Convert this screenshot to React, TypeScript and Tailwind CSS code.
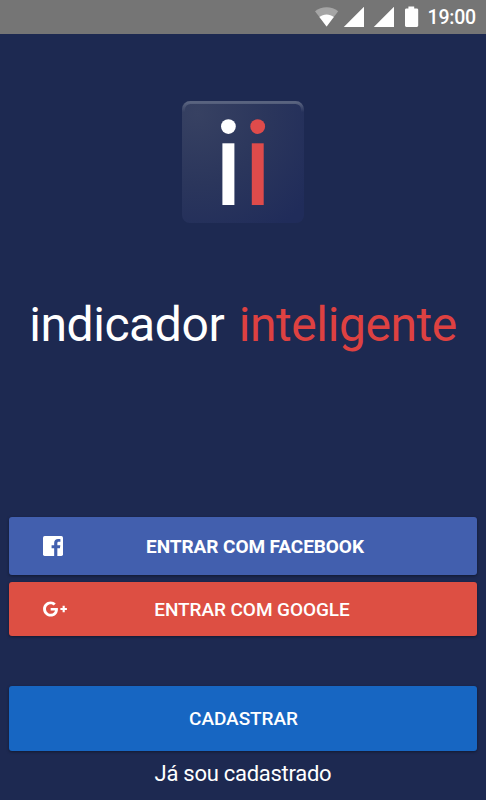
import type { ReactNode } from "react";

/** Status bar glyphs: wifi, two signal triangles and the battery. */
function StatusIcons() {
  return (
    <svg width="104" height="34" viewBox="315 0 104 34" fill="#fff" aria-hidden>
      <path d="M326.6 26.5 315 11.3C318.2 8.6 322.3 7.2 326.6 7.2s8.4 1.4 11.6 4.1Z" fillOpacity=".35" />
      <path d="M326.6 26.5 319.4 17c2-1.6 4.5-2.5 7.2-2.5s5.2.9 7.2 2.5Z" />
      <path d="M343.8 27 364 6.8V27ZM373.8 27 394 6.8V27Z" />
      <path d="M408.4 6.6h5.8v1.900h2.600c.8 0 1.400.6 1.400 1.400v15.600c0 .8-.6 1.400-1.400 1.400h-10.400c-.8 0-1.400-.6-1.400-1.400V9.900c0-.8.6-1.400 1.400-1.400h2Z" />
    </svg>
  );
}

function StatusBar() {
  return (
    <header className="flex h-[34px] shrink-0 items-center justify-end gap-[9px] bg-[#757575] pr-[10px]">
      <StatusIcons />
      <span className="pt-0.5 text-[19.5px] leading-[34px] font-medium tracking-[-0.2px] text-white">
        19:00
      </span>
    </header>
  );
}

function AppLogo() {
  return (
    <svg width="126" height="126" viewBox="180 99 126 126" className="mt-[65px]" aria-hidden>
      <defs>
        <radialGradient id="tile" cx="0.12" cy="0.1" r="1.15">
          <stop offset="0" stopColor="#374162" />
          <stop offset="0.5" stopColor="#2b365c" />
          <stop offset="1" stopColor="#202c5a" />
        </radialGradient>
        <linearGradient id="edge" x1="0" y1="0" x2="0" y2="1">
          <stop offset="0" stopColor="#59637f" />
          <stop offset="0.08" stopColor="#59637f" stopOpacity="0" />
        </linearGradient>
      </defs>
      <rect x="182" y="101" width="122" height="122" rx="8" fill="url(#tile)" />
      <rect x="183.5" y="102.5" width="119" height="119" rx="7" fill="none" stroke="url(#edge)" strokeWidth="3" />
      <circle cx="228.4" cy="126.6" r="7.4" fill="#fff" />
      <rect x="222.4" y="143.3" width="12" height="61.7" fill="#fff" />
      <circle cx="257.7" cy="126.6" r="7.4" fill="#de4b4b" />
      <rect x="251.8" y="143.3" width="11.9" height="61.7" fill="#de4b4b" />
    </svg>
  );
}

function FacebookIcon() {
  return (
    <svg width="20" height="20" viewBox="0 0 24 24" aria-hidden>
      <rect width="24" height="24" rx="2" fill="#fff" />
      <path
        fill="#425fae"
        d="M13.4 24v-9.300h-3.100v-3.600h3.100V8.400c0-3.100 1.900-4.800 4.700-4.800 1.300 0 2.500.1 2.800.15v3.250h-1.900c-1.500 0-1.800.7-1.800 1.800v2.300h3.600l-.5 3.600h-3.100V24Z"
      />
    </svg>
  );
}

function GooglePlusIcon() {
  return (
    <svg width="26" height="26" viewBox="0 0 24 24" fill="#fff" aria-hidden>
      <path d="M23 11h-2V9h-2v2h-2v2h2v2h2v-2h2M8 11v2.4h4c-.2 1-1.2 3-4 3-2.4 0-4.3-2-4.3-4.4S5.6 7.6 8 7.6c1.4 0 2.3.6 2.8 1.1l1.9-1.8C11.5 5.7 9.9 5 8 5c-3.9 0-7 3.1-7 7s3.1 7 7 7c4 0 6.7-2.8 6.7-6.8 0-.5 0-.8-.1-1.2H8Z" />
    </svg>
  );
}

interface ActionButtonProps {
  /** Colour, height and text classes. */
  className: string;
  icon?: ReactNode;
  children: ReactNode;
}

function ActionButton({ className, icon, children }: ActionButtonProps) {
  return (
    <button
      type="button"
      className={`grid w-full shrink-0 grid-cols-[60px_1fr_60px] items-center rounded-[3px] text-[19px] tracking-[-0.07px] text-white shadow-[0_1px_3px_rgba(0,0,0,0.4)] ${className}`}
    >
      <span className="flex justify-end">{icon}</span>
      <span className="text-center whitespace-nowrap">{children}</span>
    </button>
  );
}

export default function App() {
  return (
    <div className="flex h-[800px] w-[486px] flex-col overflow-hidden bg-[#1d2951] font-[Roboto,sans-serif]">
      <StatusBar />
      <main className="flex flex-1 flex-col items-center px-[9px]">
        <AppLogo />
        <h1 className="mt-[70px] text-[48px] leading-[60px] tracking-[-0.42px] whitespace-nowrap text-white">
          indicador <span className="ml-[3px] text-[#de4141]">inteligente</span>
        </h1>
        <div className="mt-[162px] flex w-[468px] flex-col gap-[7px]">
          <ActionButton
            className="h-[58px] bg-[#425fae] font-bold"
            icon={<span className="mr-1.5"><FacebookIcon /></span>}
          >
            <span className="ml-6 block pt-0.5">ENTRAR COM FACEBOOK</span>
          </ActionButton>
          <ActionButton
            className="h-[54px] bg-[#dd4f43] font-medium"
            icon={<span className="mr-px"><GooglePlusIcon /></span>}
          >
            <span className="ml-[18px] block pt-0.5">ENTRAR COM GOOGLE</span>
          </ActionButton>
        </div>
        <div className="mt-[50px] flex w-[468px] flex-col">
          <ActionButton className="h-[65px] bg-[#1766c2] font-medium">
            <span className="block pt-0.5 pl-px">CADASTRAR</span>
          </ActionButton>
        </div>
        <a href="#" className="mt-2 text-[22px] leading-[30px] tracking-[-0.27px] text-white">
          Já sou cadastrado
        </a>
      </main>
    </div>
  );
}
